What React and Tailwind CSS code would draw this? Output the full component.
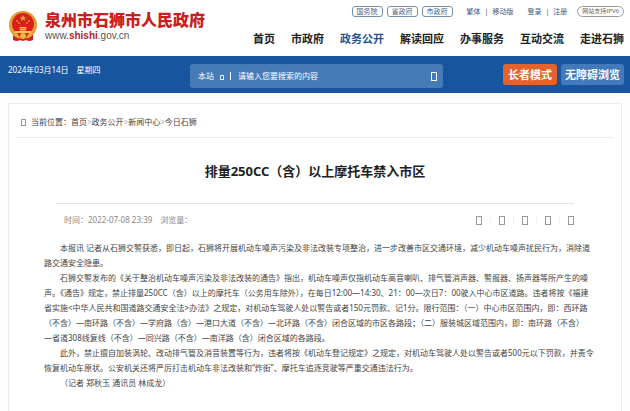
import { useState } from 'react';

const portals = ['国务院', '省政府', '市政府'];

const navItems = ['首页', '市政府', '政务公开', '解读回应', '办事服务', '互动交流', '走进石狮'];

const crumbs = ['首页', '政务公开', '新闻中心', '今日石狮'];

const tools = ['打印', '收藏', '微信', '微博', '分享'];

const paragraphs = [
  [
    '本报讯 记者从石狮交警获悉，即日起，石狮将开展机动车噪声污染及非法改装专项整治，进一步改善市区交通环境，减少机动车噪声扰民行为，消除道',
    '路交通安全隐患。',
  ],
  [
    '石狮交警发布的《关于整治机动车噪声污染及非法改装的通告》指出，机动车噪声仅指机动车高音喇叭、排气管消声器、警报器、扬声器等所产生的噪',
    '声。《通告》规定，禁止排量250CC（含）以上的摩托车（公务用车除外），在每日12:00—14:30、21：00—次日7：00驶入中心市区道路。违者将按《福建',
    '省实施<中华人民共和国道路交通安全法>办法》之规定，对机动车驾驶人处以警告或者150元罚款、记1分。限行范围：（一）中心市区范围内，即：西环路',
    '（不含）—南环路（不含）—学府路（含）—港口大道（不含）—北环路（不含）闭合区域的市区各路段；（二）服装城区域范围内，即：南环路（不含）',
    '—省道308线复线（不含）—同兴路（不含）—南洋路（含）闭合区域的各路段。',
  ],
  [
    '此外，禁止擅自加装涡轮、改动排气管及消音装置等行为，违者将按《机动车登记规定》之规定，对机动车驾驶人处以警告或者500元以下罚款，并责令',
    '恢复机动车原状。公安机关还将严厉打击机动车非法改装和“炸街”、摩托车追逐竞驶等严重交通违法行为。',
  ],
  ['（记者 郑秋玉 通讯员 林成龙）'],
];

function Emblem() {
  return (
    <svg viewBox="0 0 30 31" className="h-[31px] w-[30px] shrink-0" aria-hidden="true">
      <path d="M5 21 L5 29 Q9 31 12 29 L15 30 L18 29 Q21 31 25 29 L25 21Z" fill="#d3221c" />
      <circle cx="15" cy="14" r="14" fill="#e9a63c" />
      <circle cx="15" cy="14" r="13" fill="none" stroke="#d48a2a" strokeWidth="1" strokeDasharray="2 1" />
      <circle cx="15" cy="13" r="11" fill="#d6211b" />
      <path d="M15 4l1 2.200h2.300l-1.800 1.500.7 2.300-2.200-1.400-2.200 1.400.7-2.300-1.800-1.500H14z" fill="#f0a040" />
      <g fill="#f6c84e">
        <circle cx="9" cy="10" r="0.8" />
        <circle cx="11" cy="12" r="0.8" />
        <circle cx="19" cy="12" r="0.8" />
        <circle cx="21" cy="10" r="0.8" />
        <path d="M12 16h6l1 1.500h-8zM12 18h6v1.500h-6zM7 20h16v2H7z" />
      </g>
      <path d="M10 23h10l-2 5h-6z" fill="#d3221c" />
      <circle cx="15" cy="25" r="3" fill="#f0b545" />
      <path d="M6 24q4 3 6 2M24 24q-4 3-6 2" fill="none" stroke="#f0bd45" strokeWidth="1" />
    </svg>
  );
}

// empty glyph box
function Glyph({ className }) {
  return <span aria-hidden="true" className={`block border ${className}`} />;
}

function Header() {
  return (
    <header className="flex h-14 items-start justify-between bg-white pr-[6px] pl-2">
      <a href="#" className="flex items-start pt-[11px]">
        <Emblem />
        <span className="ml-[7px]">
          <span className="block text-[16px] leading-[18px] font-black text-[#c8201c]">泉州市石狮市人民政府</span>
          <span className="block font-[Liberation_Sans] text-[10px] leading-[14px] text-[#555]">
            www.<b className="text-[#b3262a]">shishi</b>.gov.cn
          </span>
        </span>
      </a>
      <div>
        <div className="mt-[6px] flex h-[11px] items-center justify-end text-[7px] leading-[9px] text-[#44566b]">
          <div className="flex gap-1">
            {portals.map(p => (
              <a key={p} href="#" className="rounded-[3px] border border-[#7391ac] px-1 text-[#3f5f80]">{p}</a>
            ))}
          </div>
          <div className="ml-[14px] flex gap-1">
            <a href="#" className="text-[#1c4f8c]">繁体</a>
            <span>|</span>
            <a href="#">移动版</a>
          </div>
          <div className="ml-[14px] flex gap-1">
            <a href="#">登录</a>
            <span>|</span>
            <a href="#">注册</a>
          </div>
          <a href="#" className="ml-[10px] rounded-full border border-[#999] px-1 text-[6px] text-[#666]">网站支持IPV6</a>
        </div>
        <nav className="mt-[13px] flex gap-4 text-[11px] leading-[18px] font-bold text-[#222]">
          {navItems.map(n => (
            <a key={n} href="#" className={n === '政务公开' ? 'text-[#1d5597]' : ''}>{n}</a>
          ))}
        </nav>
      </div>
    </header>
  );
}

function SearchBar() {
  const [keyword, setKeyword] = useState('');

  return (
    <div className="flex h-[37px] items-start bg-[#17569f] pt-2 pr-[6px] pl-2 text-[8px] text-white">
      <div className="w-[182px] leading-[11px]">2024年03月14日　星期四</div>
      <form onSubmit={e => e.preventDefault()} className="flex h-6 w-[41%] items-center rounded-[3px] bg-[#477bb8] px-[6px]">
        <select aria-label="搜索范围" className="w-[22px] appearance-none px-[2px] text-[8px]">
          <option>本站</option>
        </select>
        <Glyph className="mt-[2px] ml-[2px] h-[5px] w-[4px] border-[#dfe9f5]" />
        <span className="ml-[6px] h-2 w-px bg-white" />
        <input value={keyword} onChange={e => setKeyword(e.target.value)} aria-label="搜索"
          placeholder="请输入您要搜索的内容"
          className="ml-[7px] min-w-0 flex-1 text-[8px] outline-none placeholder:text-white" />
        <button type="submit" aria-label="搜索">
          <Glyph className="h-[9px] w-[6px] border-white" />
        </button>
      </form>
      <div className="ml-auto flex gap-1 text-[11px] leading-[21px] font-bold">
        <button className="rounded-[3px] bg-[#e5622e] px-1">
          <span className="block px-px">长者模式</span>
        </button>
        <button className="rounded-[3px] bg-[#427abb] px-1">无障碍浏览</button>
      </div>
    </div>
  );
}

function Article() {
  return (
    <article className="mx-[40px]">
      <h1 className="pt-[24px] pb-[23px] text-center text-[13px] leading-[18px] font-bold text-[#222]">
        排量250CC（含）以上摩托车禁入市区
      </h1>
      <div className="flex items-center justify-between border-t border-[#e6e6e6] pt-[11px] pl-2 text-[8px] leading-[10px] text-[#888]">
        <div className="flex gap-2">
          <span>时间：2022-07-08 23:39</span>
          <span>浏览量：</span>
        </div>
        <div className="flex items-center gap-2">
          {tools.map((t, i) => (
            <div key={t} className="flex items-center gap-2">
              {i > 0 && <span className="h-[7px] w-px bg-[#eee]" />}
              <button aria-label={t}><Glyph className="h-[9px] w-[6px] border-[#999]" /></button>
            </div>
          ))}
        </div>
      </div>
      <div className="-mx-3 pt-[15px] text-[8px] leading-[15px] whitespace-nowrap text-[#444]">
        {paragraphs.map((lines, i) => (
          <p key={i} className="indent-4">
            {lines.map((line, j) => (
              <span key={j}>{j > 0 && <br />}{line}</span>
            ))}
          </p>
        ))}
      </div>
    </article>
  );
}

export default function App() {
  return (
    <div lang="zh-CN" className="flex min-h-screen flex-col bg-[#fdfdfd] font-['Noto_Sans','Noto_Sans_CJK_SC',sans-serif]">
      <Header />
      <SearchBar />
      <main className="mx-2 mt-[10px] flex-1 border border-b-0 border-[#ececec] bg-white px-[7px]">
        <nav aria-label="当前位置" className="flex h-[34px] items-center border-b border-[#ebebeb] pt-[3px] pl-[5px] text-[8px] leading-[10px] text-[#444]">
          <Glyph className="mr-[5px] h-[7px] w-[5px] border-[#999]" />
          当前位置：
          {crumbs.map((c, i) => (
            <span key={c} className="flex">
              {i > 0 && <span className="text-[#aaa]">&gt;</span>}
              <a href="#">{c}</a>
            </span>
          ))}
        </nav>
        <Article />
      </main>
    </div>
  );
}
